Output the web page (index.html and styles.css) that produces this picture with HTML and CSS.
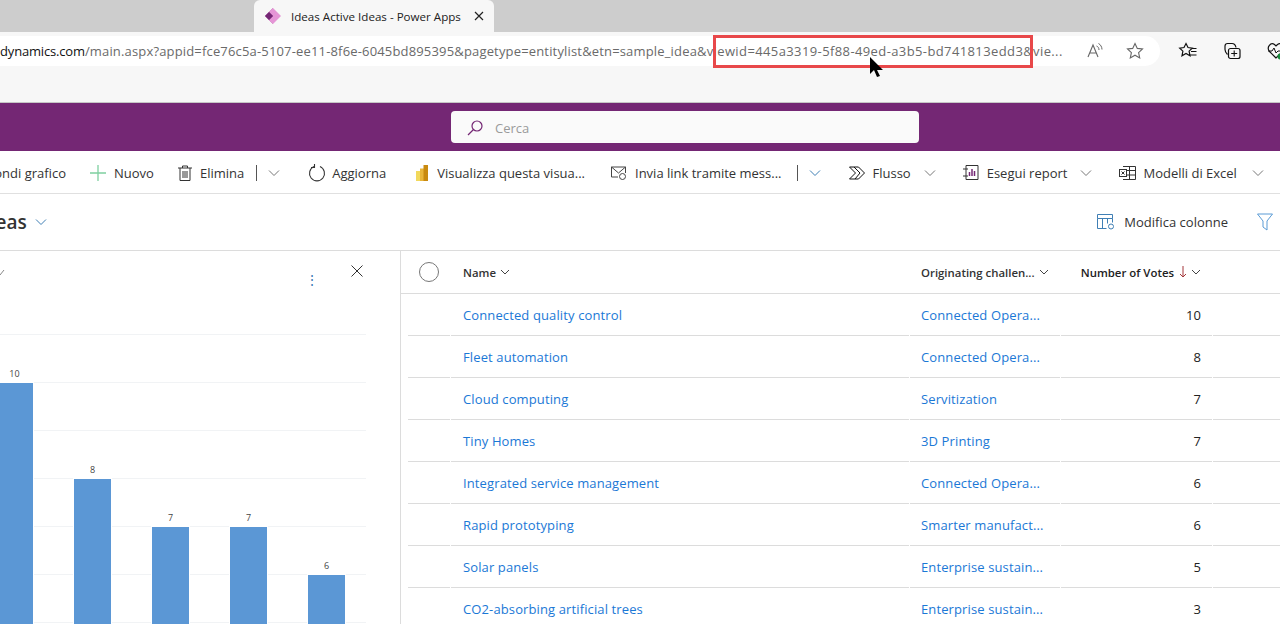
FILE: index.html
```html
<!DOCTYPE html>
<html lang="it">
<head>
    <meta charset="UTF-8">
    <meta name="viewport" content="width=device-width, initial-scale=1.0">
    <title>Ideas Active Ideas - Power Apps</title>
    <link rel="stylesheet" href="styles.css">
</head>
<body>
    <div class="tabstrip">
        <div class="tab">
            <svg class="tab-icon" width="16" height="16" viewBox="0 0 16 16"><path d="M8 0L0 8l8 8z" fill="#a8479c"/><path d="M8 0l8 8-8 8-4-4 4-4-4-4z" fill="#e595d6"/><path d="M4 4l4 4-4 4-4-4z" fill="#742774"/></svg>
            <span class="tab-title">Ideas Active Ideas - Power Apps</span>
            <svg class="tab-close" width="10" height="10" viewBox="0 0 10 10"><path d="M1 1l8 8M9 1l-8 8" stroke="#222" stroke-width="1.2"/></svg>
        </div>
    </div>
    <div class="browserbar">
        <div class="urlrow">
            <div class="pill">
                <span class="url"><b>dynamics.com</b>/main.aspx?appid=fce76c5a-5107-ee11-8f6e-6045bd895395&amp;pagetype=entitylist&amp;etn=sample_idea&amp;<span class="url-view">viewid=445a3319-5f88-49ed-a3b5-bd741813edd3&amp;vie...</span></span>
                <svg class="pill-icon" width="20" height="20" viewBox="0 0 20 20"><path d="M3 16L8 4l5 12M5 12h6" fill="none" stroke="#666" stroke-width="1.1"/><path d="M11.500 5c1.500.5 2.500 2 2.500 4M13.500 2.500c2 1 3.500 3.500 3.500 6" fill="none" stroke="#666"/></svg>
                <svg class="pill-icon" width="20" height="20" viewBox="0 0 20 20"><path d="M10 2.500l2.300 4.900 5.200.6-3.900 3.600 1.100 5.300L10 14.200l-4.700 2.700 1.100-5.300L2.500 8l5.200-.6z" fill="none" stroke="#666" stroke-width="1.100"/></svg>
            </div>
            <svg class="bar-icon" width="20" height="20" viewBox="0 0 20 20"><path d="M8 2.500l2 4 4.300.6-3.200 3 .9 4.600-4-2.300-4 2.300.9-4.600-3.200-3 4.300-.6z" fill="none" stroke="#111" stroke-width="1.200"/><path d="M14 7.500h4.500M13 10.500h5.500M12 14h6.500" stroke="#111" stroke-width="1.100"/></svg>
            <svg class="bar-icon bar-icon-wide" width="20" height="20" viewBox="0 0 20 20"><path d="M5.500 13.500C4 12 3 10.500 3 8.500V5c0-1.500 1-2.500 2.500-2.500H10c2 0 3.500 1.500 4 4" fill="none" stroke="#111" stroke-width="1.200"/><rect x="6.500" y="7.500" width="11.500" height="10" rx="2" fill="#f7f7f7" stroke="#111" stroke-width="1.200"/><path d="M12.200 9.500v6M9.200 12.500h6" stroke="#111" stroke-width="1.100"/></svg>
            <svg class="bar-icon bar-icon-wide" width="20" height="20" viewBox="0 0 20 20"><path d="M10 17L3.500 10.500C0 6 5 1 8.500 3.500L10 5l1.500-1.500C15 1 20 6 16.500 10.500z" fill="none" stroke="#111" stroke-width="1.200"/><path d="M2 10h4l2-3 2 5 2-2h2" fill="none" stroke="#111"/><circle cx="14.500" cy="15.500" r="3" fill="#16893a"/></svg>
        </div>
    </div>

    <header class="appbar">
        <div class="search">
            <svg width="18" height="18" viewBox="0 0 18 18"><circle cx="11" cy="7" r="5" fill="none" stroke="#742774" stroke-width="1.200"/><path d="M7.500 10.500L2 16" stroke="#742774" stroke-width="1.200"/></svg>
            <span>Cerca</span>
        </div>
    </header>

    <nav class="commands">
        <span class="cmd cmd-cut">Nascondi grafico</span>
        <span class="cmd cmd-new">
            <svg width="16" height="16" viewBox="0 0 16 16"><path d="M8 0v16M0 8h16" stroke="#7fd0a0" stroke-width="1.300"/></svg>Nuovo
        </span>
        <span class="cmd cmd-del">
            <svg width="14" height="16" viewBox="0 0 14 16"><path d="M0 3h14M4.500 3V1h5v2M2 3v12.500h10V3M5 6v7M7 6v7M9 6v7" fill="none" stroke="#333" stroke-width="1"/></svg>Elimina
            <i class="sep"></i>
            <svg class="chev chev-split" width="12" height="8" viewBox="0 0 12 8"><path d="M1 1.500l5 5 5-5" fill="none" stroke="#777"/></svg>
        </span>
        <span class="cmd cmd-ref">
            <svg width="18" height="18" viewBox="0 0 18 18"><path d="M6 2.500a7.500 7.500 0 1 0 6 0M6.500 0v3.500H3" fill="none" stroke="#333" stroke-width="1.100"/></svg>Aggiorna
        </span>
        <span class="cmd cmd-pbi">
            <svg width="14" height="16" viewBox="0 0 14 16"><rect x="1" y="6" width="4" height="10" fill="#f2d95c"/><rect x="5" y="3.500" width="4" height="12.500" fill="#eab63a"/><rect x="8.500" y="0" width="4.500" height="16" fill="#c98a10"/></svg>Visualizza questa visua...
        </span>
        <span class="cmd cmd-mail">
            <svg width="16" height="14" viewBox="0 0 16 14"><path d="M7 11H.5V1h14v6M.5 1L7.500 7l7-6" fill="none" stroke="#444"/><circle cx="11.500" cy="10.500" r="3" fill="none" stroke="#444"/></svg>Invia link tramite mess...
            <i class="sep"></i>
            <svg class="chev chev-split" width="12" height="8" viewBox="0 0 12 8"><path d="M1 1.500l5 5 5-5" fill="none" stroke="#3f7fb5"/></svg>
        </span>
        <span class="cmd cmd-flow">
            <svg width="16" height="14" viewBox="0 0 16 14"><path d="M.5 1h9l6 6-6 6h-9l6-6zM5 1l6 6-5 6" fill="none" stroke="#111"/></svg>Flusso
            <svg class="chev" width="12" height="8" viewBox="0 0 12 8"><path d="M1 1.500l5 5 5-5" fill="none" stroke="#777"/></svg>
        </span>
        <span class="cmd cmd-rep">
            <svg width="16" height="16" viewBox="0 0 16 16"><path d="M3 .5h12v14H3M0 4h5M0 11h5M3 .5v14" fill="none" stroke="#333"/><path d="M6.500 7v4M9 4v7M11.500 6v5" stroke="#742774" stroke-width="1.500"/></svg>Esegui report
            <svg class="chev" width="12" height="8" viewBox="0 0 12 8"><path d="M1 1.500l5 5 5-5" fill="none" stroke="#777"/></svg>
        </span>
        <span class="cmd cmd-xls">
            <svg width="17" height="14" viewBox="0 0 17 14"><path d="M4 .5h12.500v13H4M10.500.5v13M4 4.500h12.500M4 9h12.500" fill="none" stroke="#333"/><rect x=".5" y="3.500" width="7" height="7" fill="#fff" stroke="#333"/><path d="M2.500 5.500l3 3M5.500 5.500l-3 3" stroke="#333"/></svg>Modelli di Excel
            <svg class="chev" width="12" height="8" viewBox="0 0 12 8"><path d="M1 1.500l5 5 5-5" fill="none" stroke="#777"/></svg>
        </span>
    </nav>

    <div class="titlerow">
        <h1 class="view-title">Active Ideas</h1>
        <svg class="chev-title" width="12" height="8" viewBox="0 0 12 8"><path d="M1 1.500l5 5 5-5" fill="none" stroke="#3f7fb5"/></svg>
        <span class="edit-cols">
            <svg width="18" height="16" viewBox="0 0 18 16"><path d="M.5.500h15v4H.5zM.5 4.500v10h9M5.500 4.500v10M10.500 4.500v5M15.500 4.500v4" fill="none" stroke="#3f7fb5"/><circle cx="14" cy="12.500" r="2.500" fill="none" stroke="#3f7fb5"/></svg>Modifica colonne
        </span>
        <svg class="filter" width="16" height="18" viewBox="0 0 16 18"><path d="M.5 1h15L10 8v9l-4-3V8z" fill="none" stroke="#5a9bd5"/></svg>
    </div>

    <main class="content">
        <section class="chart">
            <svg class="chart-x" width="12" height="12" viewBox="0 0 12 12"><path d="M.5.500l11 11M11.500.500l-11 11" stroke="#333"/></svg>
            <span class="chart-more">⋮</span>
            <svg class="plot" width="400" height="374" viewBox="0 0 400 374">
                <path d="M0 24l4-5" fill="none" stroke="#888"/>
                <g stroke="#f1f3f5">
                    <path d="M0 83.500h366M0 131.500h366M0 179.500h366M0 227.500h366M0 275.500h366M0 323.500h366M0 371.500h366"/>
                </g>
                <g fill="#5b97d5" stroke="#fff">
                    <rect x="-4.500" y="131.500" width="38" height="243"/>
                    <rect x="73.500" y="227.500" width="38" height="147"/>
                    <rect x="151.500" y="275.500" width="38" height="99"/>
                    <rect x="229.500" y="275.500" width="38" height="99"/>
                    <rect x="307.500" y="323.500" width="38" height="51"/>
                </g>
                <g class="bar-val" text-anchor="middle">
                    <text x="14.500" y="126">10</text>
                    <text x="92.500" y="222">8</text>
                    <text x="170.500" y="270">7</text>
                    <text x="248.500" y="270">7</text>
                    <text x="326.500" y="318">6</text>
                </g>
            </svg>
        </section>

        <section class="grid">
            <div class="head">
                <span class="c-check"><i class="radio"></i></span>
                <span class="c-name">Name <svg width="10" height="6" viewBox="0 0 10 6"><path d="M1 1l4 4 4-4" fill="none" stroke="#444"/></svg></span>
                <span class="c-ch">Originating challen... <svg width="10" height="6" viewBox="0 0 10 6"><path d="M1 1l4 4 4-4" fill="none" stroke="#444"/></svg></span>
                <span class="c-votes">Number of Votes
                    <svg class="sort" width="8" height="12" viewBox="0 0 8 12"><path d="M4 0v11M1 8l3 3 3-3" fill="none" stroke="#a4373a"/></svg>
                    <svg width="10" height="6" viewBox="0 0 10 6"><path d="M1 1l4 4 4-4" fill="none" stroke="#444"/></svg>
                </span>
            </div>
            <div class="row"><span class="c-check"></span><a class="c-name">Connected quality control</a><a class="c-ch">Connected Opera...</a><span class="c-votes">10</span><span class="c-rest"></span></div>
            <div class="row"><span class="c-check"></span><a class="c-name">Fleet automation</a><a class="c-ch">Connected Opera...</a><span class="c-votes">8</span><span class="c-rest"></span></div>
            <div class="row"><span class="c-check"></span><a class="c-name">Cloud computing</a><a class="c-ch">Servitization</a><span class="c-votes">7</span><span class="c-rest"></span></div>
            <div class="row"><span class="c-check"></span><a class="c-name">Tiny Homes</a><a class="c-ch">3D Printing</a><span class="c-votes">7</span><span class="c-rest"></span></div>
            <div class="row"><span class="c-check"></span><a class="c-name">Integrated service management</a><a class="c-ch">Connected Opera...</a><span class="c-votes">6</span><span class="c-rest"></span></div>
            <div class="row"><span class="c-check"></span><a class="c-name">Rapid prototyping</a><a class="c-ch">Smarter manufact...</a><span class="c-votes">6</span><span class="c-rest"></span></div>
            <div class="row"><span class="c-check"></span><a class="c-name">Solar panels</a><a class="c-ch">Enterprise sustain...</a><span class="c-votes">5</span><span class="c-rest"></span></div>
            <div class="row"><span class="c-check"></span><a class="c-name">CO2-absorbing artificial trees</a><a class="c-ch">Enterprise sustain...</a><span class="c-votes">3</span><span class="c-rest"></span></div>
        </section>
    </main>

    <!-- callout over the address bar -->
    <div class="callout"></div>
    <svg class="pointer" width="14" height="20" viewBox="0 0 14 20"><path d="M0 0v17l4-4 3 7 3-1-3-6h6z" fill="#000"/></svg>
</body>
</html>
```

FILE: styles.css
```css
body {
    font-family: "Open Sans", "Noto Sans", sans-serif;
    font-size: 13px;
    color: #333;
    background-color: #ffffff;
    margin: 0;
    height: 624px;
    overflow: hidden;
    position: relative;
}

svg {
    flex: none;
}

.tabstrip {
    background-color: #cdcdcd;
    height: 32px;
    padding-left: 254px;
    display: flex;
}

.tab {
    background-color: #f7f7f7;
    border-radius: 6px 6px 0 0;
    width: 240px;
    box-sizing: border-box;
    padding: 0 10px 0 11px;
    display: flex;
    align-items: center;
}

.tab-title {
    font-size: 11.6px;
    color: #222;
    margin-left: 10px;
    flex: 1;
    white-space: nowrap;
}

.browserbar {
    background-color: #f7f7f7;
    height: 70px;
    border-bottom: 1px solid #c6c6c6;
}

.urlrow {
    display: flex;
    align-items: center;
    height: 30px;
    padding-top: 4px;
}

.pill {
    background-color: #ffffff;
    border-radius: 0 15px 15px 0;
    width: 1160px;
    height: 30px;
    display: flex;
    align-items: center;
    padding-right: 15px;
    box-sizing: border-box;
    flex: none;
}

.url {
    flex: 1;
    min-width: 0;
    white-space: nowrap;
    color: #6a6a6a;
    font-size: 13px;
    letter-spacing: 0.165px;
}

.url b {
    font-weight: normal;
    color: #111;
    letter-spacing: -0.17px;
}

.url-view {
    letter-spacing: 0.39px;
}

.pill-icon {
    margin-left: 20px;
}

.bar-icon {
    margin-left: 18px;
}

.bar-icon-wide {
    margin-left: 24px;
}

.appbar {
    background-color: #742774;
    height: 48px;
    display: flex;
    justify-content: center;
    align-items: center;
    padding-left: 90px;
}

.search {
    background-color: #fafafa;
    border-radius: 4px;
    width: 468px;
    height: 32px;
    box-sizing: border-box;
    padding: 1px 0 0 15px;
    display: flex;
    align-items: center;
    gap: 11px;
    color: #9a9a9a;
}

.commands {
    height: 41px;
    padding-top: 1px;
    border-bottom: 1px solid #e0e0e0;
    display: flex;
    align-items: center;
    white-space: nowrap;
    color: #333;
}

.cmd {
    display: flex;
    align-items: center;
    gap: 8px;
    margin-right: 27px;
    flex: none;
}

/* first button runs off the left edge */
.cmd-cut {
    width: 66px;
    justify-content: flex-end;
    margin-right: 24px;
}

.cmd-new {
    margin-right: 24px;
}

.cmd-del {
    margin-right: 28px;
}

.cmd-ref {
    gap: 6px;
    margin-right: 29px;
}

.cmd-pbi {
    margin-right: 26px;
}

.cmd-mail {
    margin-right: 28px;
}

.cmd-mail .sep {
    margin-left: 7px;
}

.cmd-xls {
    gap: 7px;
}

.cmd-xls .chev {
    margin-left: 8px;
}

.sep {
    width: 1px;
    height: 16px;
    background-color: #555;
    margin: 0 4px;
}

.chev {
    margin-left: 5px;
}

.chev-split {
    margin-left: -1px;
}

.titlerow {
    height: 56px;
    border-bottom: 1px solid #dcdcdc;
    display: flex;
    align-items: center;
    margin-left: -83px;
    padding-right: 7px;
}

.view-title {
    font-size: 19px;
    font-weight: 600;
    margin: 0 8px 0 0;
    color: #333;
    white-space: nowrap;
}

.edit-cols {
    margin-left: auto;
    display: flex;
    align-items: center;
    gap: 9px;
    margin-right: 29px;
}

.content {
    display: flex;
    height: 373px;
}

.chart {
    width: 400px;
    flex: none;
    position: relative;
    border-right: 1px solid #dcdcdc;
    overflow: hidden;
}

.plot {
    display: block;
}

.bar-val {
    font-size: 9px;
    fill: #444;
}

.bar-val text {
    stroke: none;
}

.chart-x {
    position: absolute;
    left: 351px;
    top: 14px;
}

.chart-more {
    position: absolute;
    left: 305px;
    top: 19px;
    color: #3f7fb5;
    font-size: 14px;
    line-height: 20px;
}

.grid {
    flex: 1;
    min-width: 0;
}

.head {
    height: 43px;
    display: flex;
    align-items: center;
    gap: 1px;
    box-sizing: border-box;
    padding-left: 7px;
    border-bottom: 1px solid #dcdcdc;
    font-size: 11.4px;
    font-weight: 600;
    color: #333;
}

.head .c-name,
.head .c-ch {
    display: flex;
    align-items: center;
    gap: 4px;
}

.head .c-votes {
    gap: 4px;
}

.sort {
    margin: 0 0 0 1px;
}

.row {
    height: 42px;
    display: flex;
    gap: 1px;
    padding-left: 7px;
    letter-spacing: 0.12px;
}

.row > * {
    border-bottom: 1px solid #dcdcdc;
    display: flex;
    align-items: center;
    box-sizing: border-box;
}

.row a {
    color: #1b78d6;
}

.c-check {
    width: 42px;
    flex: none;
    padding-left: 11px;
    box-sizing: border-box;
}

.radio {
    display: block;
    width: 18px;
    height: 18px;
    border: 1px solid #777;
    border-radius: 50%;
}

.c-name {
    width: 458px;
    flex: none;
    padding-left: 12px;
    box-sizing: border-box;
}

.c-ch {
    width: 150px;
    flex: none;
    padding-left: 11px;
    box-sizing: border-box;
}

.c-votes {
    width: 151px;
    flex: none;
    display: flex;
    align-items: center;
    justify-content: flex-end;
    padding-right: 11px;
    box-sizing: border-box;
    color: #222;
}

.c-rest {
    flex: 1;
}

.callout {
    position: absolute;
    left: 713px;
    top: 35px;
    width: 314px;
    height: 27px;
    border: 3px solid #e8484a;
}

.pointer {
    position: absolute;
    left: 870px;
    top: 57px;
}
```
